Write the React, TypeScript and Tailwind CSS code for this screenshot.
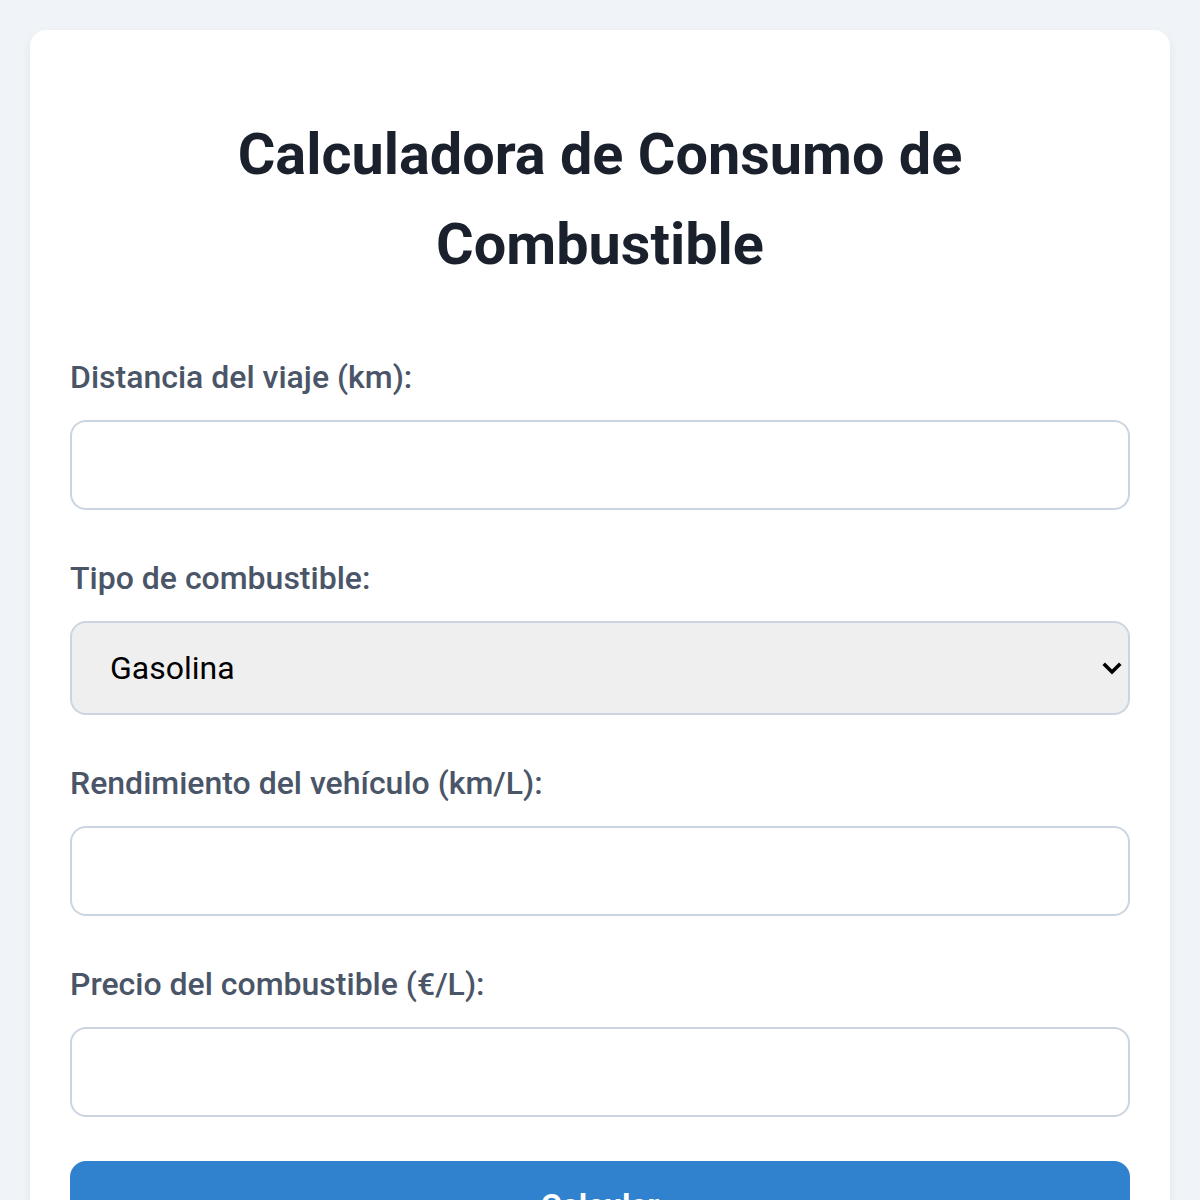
import { useState } from "react";

const font = "font-['Roboto','Liberation_Sans',sans-serif]";

function Field({ label, children }: { label: string; children: React.ReactNode }) {
  return (
    <div className="mb-[44px]">
      <label className="block mb-[19px] text-[32px] leading-[48px] font-medium text-[#4a5568]">
        {label}
      </label>
      {children}
    </div>
  );
}

export default function App() {
  const [distancia, setDistancia] = useState("");
  const [tipo, setTipo] = useState("gasolina");
  const [rendimiento, setRendimiento] = useState("");
  const [precio, setPrecio] = useState("");

  const inputCls =
    "block w-full h-[90px] px-[24px] rounded-[16px] border-2 border-[#cbd5e0] bg-white text-[32px] text-[#1a202c] outline-none";

  return (
    <div className={`min-h-screen bg-[#f0f4f8] p-[30px] ${font}`}>
      <div className="rounded-[16px] bg-white px-[40px] pt-[40px] pb-[40px] shadow-[0_4px_12px_rgba(0,0,0,0.06)]">
        <h1 className="mt-[40px] mb-[63px] text-center text-[57.6px] leading-[90px] font-bold text-[#1a202c]">
          Calculadora de Consumo de Combustible
        </h1>

        <Field label="Distancia del viaje (km):">
          <input
            type="number"
            value={distancia}
            onChange={(e) => setDistancia(e.target.value)}
            className={inputCls}
          />
        </Field>

        <Field label="Tipo de combustible:">
          <div className="relative">
            <select
              value={tipo}
              onChange={(e) => setTipo(e.target.value)}
              className="block w-full h-[94px] appearance-none pl-[38px] pr-[60px] rounded-[16px] border-2 border-[#cbd5e0] bg-[#efefef] text-[32px] text-black outline-none"
            >
              <option value="gasolina">Gasolina</option>
              <option value="diesel">Diésel</option>
              <option value="glp">GLP</option>
            </select>
            <svg
              className="pointer-events-none absolute right-[8px] top-1/2 -translate-y-1/2"
              width="20"
              height="14"
              viewBox="0 0 20 14"
              fill="none"
            >
              <path d="M3 4l7 7 7-7" stroke="#000" strokeWidth="3.6" strokeLinecap="square" />
            </svg>
          </div>
        </Field>

        <Field label="Rendimiento del vehículo (km/L):">
          <input
            type="number"
            value={rendimiento}
            onChange={(e) => setRendimiento(e.target.value)}
            className={inputCls}
          />
        </Field>

        <Field label="Precio del combustible (€/L):">
          <input
            type="number"
            value={precio}
            onChange={(e) => setPrecio(e.target.value)}
            className={inputCls}
          />
        </Field>

        <button className="block w-full h-[88px] rounded-[16px] bg-[#3182ce] text-[32px] font-bold text-white">
          Calcular
        </button>
      </div>
    </div>
  );
}
